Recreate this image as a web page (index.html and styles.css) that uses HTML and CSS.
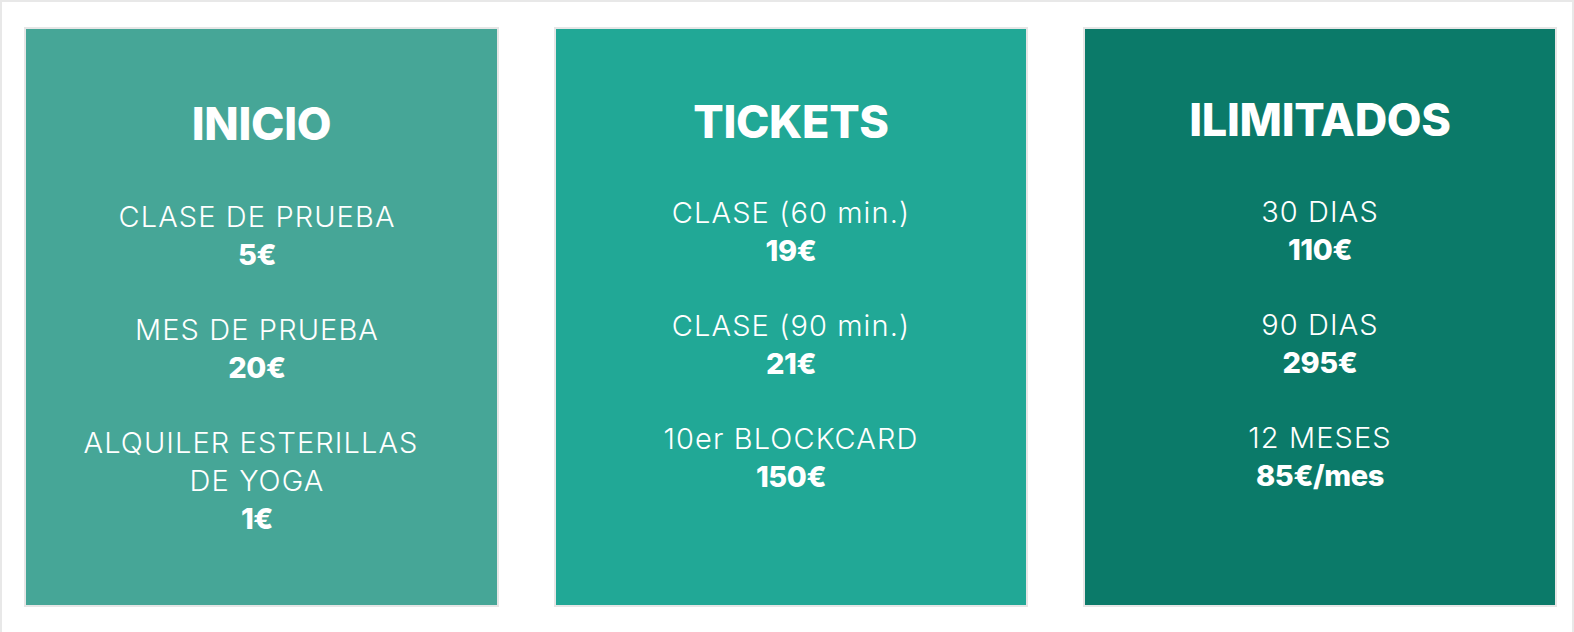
FILE: index.html
```html
<!DOCTYPE html>
<html lang="es">
<head>
<meta charset="utf-8">
<title>Precios</title>
<link rel="stylesheet" href="styles.css">
</head>
<body>
<div class="frame">
  <div class="cards">
    <section class="card card-inicio">
      <h2 class="card-title">INICIO</h2>
      <div class="item"><p class="label">CLASE DE PRUEBA</p><p class="price">5€</p></div>
      <div class="item"><p class="label">MES DE PRUEBA</p><p class="price">20€</p></div>
      <div class="item"><p class="label"><span class="line-wide">ALQUILER ESTERILLAS</span><br>DE YOGA</p><p class="price">1€</p></div>
    </section>
    <section class="card card-tickets">
      <h2 class="card-title">TICKETS</h2>
      <div class="item"><p class="label">CLASE (60 min.)</p><p class="price">19€</p></div>
      <div class="item"><p class="label">CLASE (90 min.)</p><p class="price">21€</p></div>
      <div class="item"><p class="label">10er BLOCKCARD</p><p class="price">150€</p></div>
    </section>
    <section class="card card-ilimitados">
      <h2 class="card-title">ILIMITADOS</h2>
      <div class="item"><p class="label">30 DIAS</p><p class="price">110€</p></div>
      <div class="item"><p class="label">90 DIAS</p><p class="price">295€</p></div>
      <div class="item"><p class="label">12 MESES</p><p class="price">85€/mes</p></div>
    </section>
  </div>
</div>
</body>
</html>
```

FILE: styles.css
```css
html, body {
  margin: 0;
  padding: 0;
  background: #ffffff;
}

body {
  font-family: "Inter", "Open Sans", "Liberation Sans", sans-serif;
  color: #ffffff;
  overflow: hidden;
}

.frame {
  border: 2px solid #e8e8e8;
  border-bottom: none;
  height: 700px;
  padding: 25px 14px 0 22px;
}

.cards {
  display: grid;
  grid-template-columns: 475px 474px 474px;
  column-gap: 55px;
}

.card {
  height: 580px;
  box-sizing: border-box;
  border: 2px solid #e6e6e6;
  padding-top: 61px;
  text-align: center;
}

.card-inicio { background: #46a697; }
.card-tickets { background: #21a896; }
.card-ilimitados { background: #0b7a69; }

.card-title {
  margin: 0 0 40px;
  font-size: 45px;
  line-height: 64px;
  font-weight: 800;
  letter-spacing: -0.3px;
}

.card-inicio .card-title {
  margin-top: 2px;
  margin-bottom: 42px;
}

.card-ilimitados .card-title {
  margin-top: -2px;
  margin-bottom: 41px;
}

.card-inicio .item {
  padding-right: 9px;
}

.line-wide {
  margin-right: 12px;
}

.item {
  margin-bottom: 38px;
}

.label {
  margin: 0;
  font-size: 29px;
  line-height: 38px;
  font-weight: 300;
  letter-spacing: 1.1px;
}

.price {
  margin: 0;
  font-size: 29px;
  line-height: 37px;
  font-weight: 800;
  letter-spacing: -0.4px;
}
```
